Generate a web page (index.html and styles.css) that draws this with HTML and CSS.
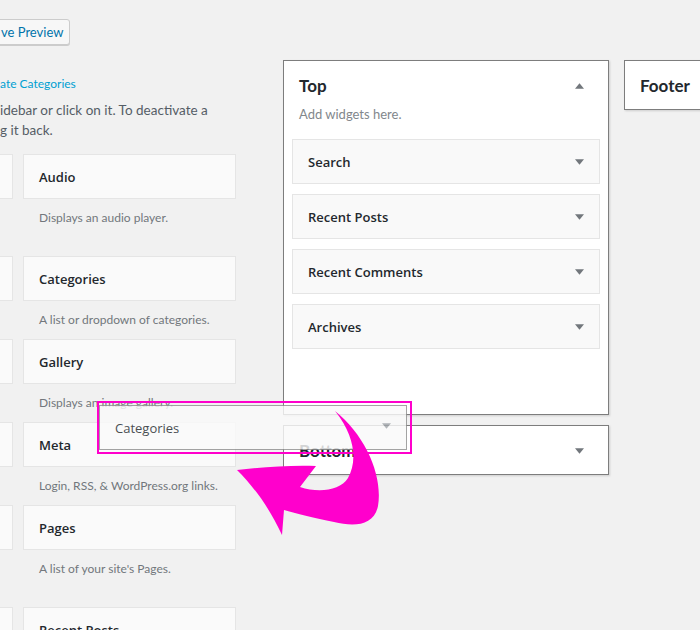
FILE: index.html
```html
<!DOCTYPE html>
<html lang="en">
<head>
    <meta charset="UTF-8">
    <title>Widgets</title>
    <link rel="stylesheet" href="styles.css">
</head>
<body>
    <div class="screen">
        <!-- Available widgets (scrolled, left part is off screen) -->
        <div class="available">
            <div class="top-actions">
                <a class="preview-btn" href="#">ve Preview</a>
            </div>
            <a class="a11y-link" href="#">ate Categories</a>
            <p class="intro">idebar or click on it. To deactivate a<br>g it back.</p>

            <div class="widget-list">
                <div class="widget-item">
                    <div class="widget-card"><h3>Archives</h3></div>
                    <div class="widget-desc">A monthly archive of your<br>site's Posts.</div>
                </div>
                <div class="widget-item">
                    <div class="widget-card"><h3>Audio</h3></div>
                    <div class="widget-desc">Displays an audio player.</div>
                </div>
                <div class="widget-item">
                    <div class="widget-card"><h3>Calendar</h3></div>
                    <div class="widget-desc">A calendar of your site's Posts.</div>
                </div>
                <div class="widget-item">
                    <div class="widget-card"><h3>Categories</h3></div>
                    <div class="widget-desc">A list or dropdown of categories.</div>
                </div>
                <div class="widget-item">
                    <div class="widget-card"><h3>Custom HTML</h3></div>
                    <div class="widget-desc">Arbitrary HTML code.</div>
                </div>
                <div class="widget-item">
                    <div class="widget-card"><h3>Gallery</h3></div>
                    <div class="widget-desc">Displays an image gallery.</div>
                </div>
                <div class="widget-item">
                    <div class="widget-card"><h3>Image</h3></div>
                    <div class="widget-desc">Displays an image.</div>
                </div>
                <div class="widget-item">
                    <div class="widget-card"><h3>Meta</h3></div>
                    <div class="widget-desc">Login, RSS, &amp; WordPress.org links.</div>
                </div>
                <div class="widget-item">
                    <div class="widget-card"><h3>Navigation Menu</h3></div>
                    <div class="widget-desc">Add a navigation menu to<br>your sidebar.</div>
                </div>
                <div class="widget-item">
                    <div class="widget-card"><h3>Pages</h3></div>
                    <div class="widget-desc">A list of your site's Pages.</div>
                </div>
                <div class="widget-item">
                    <div class="widget-card"><h3>Recent Comments</h3></div>
                    <div class="widget-desc">Your site's most recent comments.</div>
                </div>
                <div class="widget-item">
                    <div class="widget-card"><h3>Recent Posts</h3></div>
                    <div class="widget-desc">Your site's most recent Posts.</div>
                </div>
            </div>
        </div>

        <!-- Sidebars -->
        <div class="sidebars">
            <div class="sidebar-col">
                <div class="sidebar open">
                    <div class="sidebar-head">
                        <h2>Top</h2>
                        <svg class="caret up" viewBox="0 0 10 6"><path d="M0 6h10L5 0z"/></svg>
                    </div>
                    <div class="sidebar-desc">Add widgets here.</div>
                    <div class="sidebar-widgets">
                        <div class="sb-widget"><h3>Search</h3><svg class="caret" viewBox="0 0 10 6"><path d="M0 0h10L5 6z"/></svg></div>
                        <div class="sb-widget"><h3>Recent Posts</h3><svg class="caret" viewBox="0 0 10 6"><path d="M0 0h10L5 6z"/></svg></div>
                        <div class="sb-widget"><h3>Recent Comments</h3><svg class="caret" viewBox="0 0 10 6"><path d="M0 0h10L5 6z"/></svg></div>
                        <div class="sb-widget"><h3>Archives</h3><svg class="caret" viewBox="0 0 10 6"><path d="M0 0h10L5 6z"/></svg></div>
                    </div>
                </div>
                <div class="sidebar">
                    <div class="sidebar-head">
                        <h2>Bottom</h2>
                        <svg class="caret" viewBox="0 0 10 6"><path d="M0 0h10L5 6z"/></svg>
                    </div>
                </div>
            </div>
            <div class="sidebar-col wide">
                <div class="sidebar">
                    <div class="sidebar-head">
                        <h2>Footer</h2>
                    </div>
                </div>
            </div>
        </div>
    </div>

    <!-- widget being dragged -->
    <div class="drag-helper">
        <h3>Categories</h3>
        <svg class="caret" viewBox="0 0 10 6"><path d="M0 0h10L5 6z"/></svg>
    </div>
    <div class="drag-frame"></div>
    <svg class="drag-arrow" viewBox="0 0 700 630">
        <path d="M335 411 C366 436 383 476 378 506 C374 526 354 527 334 522 C314 518 298 514 284 510 L282 535 C268 505 252 485 237 470 C262 467 292 465 316 466 L300 487 C318 493 340 491 348 478 C357 462 356 437 335 411 Z"/>
    </svg>
</body>
</html>
```

FILE: styles.css
```css
/* Page */
body {
    margin: 0;
    height: 630px;
    overflow: hidden;
    position: relative;
    background: #f1f1f1;
    font-family: Lato, "Open Sans", sans-serif;
    font-size: 13px;
    color: #444;
}
.screen {
    display: flex;
    align-items: flex-start;
}
h2, h3 {
    margin: 0;
}

/* Available widgets */
.available {
    flex: 0 0 236px;
    padding-top: 19px;
}
.top-actions {
    display: flex;
}
.preview-btn {
    margin-left: -10px;
    padding: 0 6px 0 10px;
    height: 24px;
    line-height: 24px;
    border: 1px solid #ccc;
    border-radius: 3px;
    background: #f7f7f7;
    box-shadow: 0 1px 0 #ccc;
    color: #0073aa;
    font-size: 13px;
    text-decoration: none;
}
.a11y-link {
    display: block;
    margin-top: 30px;
    line-height: 18px;
    font-size: 12px;
    color: #00a0d2;
    text-decoration: none;
}
.intro {
    margin: 7px 0 0;
    line-height: 20px;
    font-size: 13.5px;
    color: #555d66;
    white-space: nowrap;
}
.widget-list {
    display: grid;
    grid-template-columns: 213px 213px;
    column-gap: 10px;
    margin: 14px 0 0 -200px;
}
.widget-card {
    height: 43px;
    padding: 0 15px;
    display: flex;
    align-items: center;
    border: 1px solid #e5e5e5;
    background: #fafafa;
}
.widget-card h3,
.sb-widget h3,
.drag-helper h3 {
    font-family: "Open Sans", Lato, sans-serif;
    font-size: 13px;
    font-weight: 600;
    color: #23282d;
}
.widget-desc {
    padding: 9px 16px 0;
    margin-bottom: 10px;
    line-height: 19px;
    font-size: 12px;
    color: #72777c;
    white-space: nowrap;
}

/* Sidebars */
.sidebars {
    display: flex;
    gap: 15px;
    margin-left: 47px;
    padding-top: 60px;
}
.sidebar-col {
    flex: 0 0 326px;
}
.sidebar-col.wide {
    flex: 0 0 200px;
}
.sidebar {
    background: #fff;
    border: 1px solid #7d7d7d;
    box-shadow: 1px 1px 2px rgba(0, 0, 0, 0.15);
    margin-bottom: 10px;
}
.sidebar-head {
    display: flex;
    justify-content: space-between;
    align-items: center;
    padding: 13px 24px 11px 15px;
}
.sidebar-head h2 {
    font-size: 17px;
    line-height: 24px;
    font-weight: 700;
    color: #23282d;
}
.sidebar.open .sidebar-head {
    padding-bottom: 7px;
}
.sidebar-desc {
    padding: 0 15px;
    line-height: 18px;
    color: #82878c;
}
.sidebar-widgets {
    padding: 16px 8px 55px;
}
.sb-widget {
    height: 43px;
    padding: 0 15px;
    margin-bottom: 10px;
    display: flex;
    justify-content: space-between;
    align-items: center;
    border: 1px solid #e5e5e5;
    background: #f9f9f9;
}
.caret {
    width: 9px;
    height: 6px;
    fill: #72777c;
}

/* Drag illustration */
.drag-helper {
    position: absolute;
    left: 99px;
    top: 405px;
    width: 308px;
    height: 45px;
    box-sizing: border-box;
    padding: 0 15px;
    display: flex;
    justify-content: space-between;
    align-items: center;
    border: 1px solid #8f8f8f;
    background: #fafafa;
    opacity: 0.82;
}
.drag-helper h3 {
    font-weight: 400;
}
.drag-helper .caret {
    fill: #a0a5aa;
    margin-top: -4px;
}
.drag-frame {
    position: absolute;
    left: 97px;
    top: 401px;
    width: 315px;
    height: 53px;
    box-sizing: border-box;
    border: 2px solid #ff00cc;
}
.drag-arrow {
    position: absolute;
    left: 0;
    top: 0;
    width: 700px;
    height: 630px;
    fill: #ff00cc;
    pointer-events: none;
}
```
